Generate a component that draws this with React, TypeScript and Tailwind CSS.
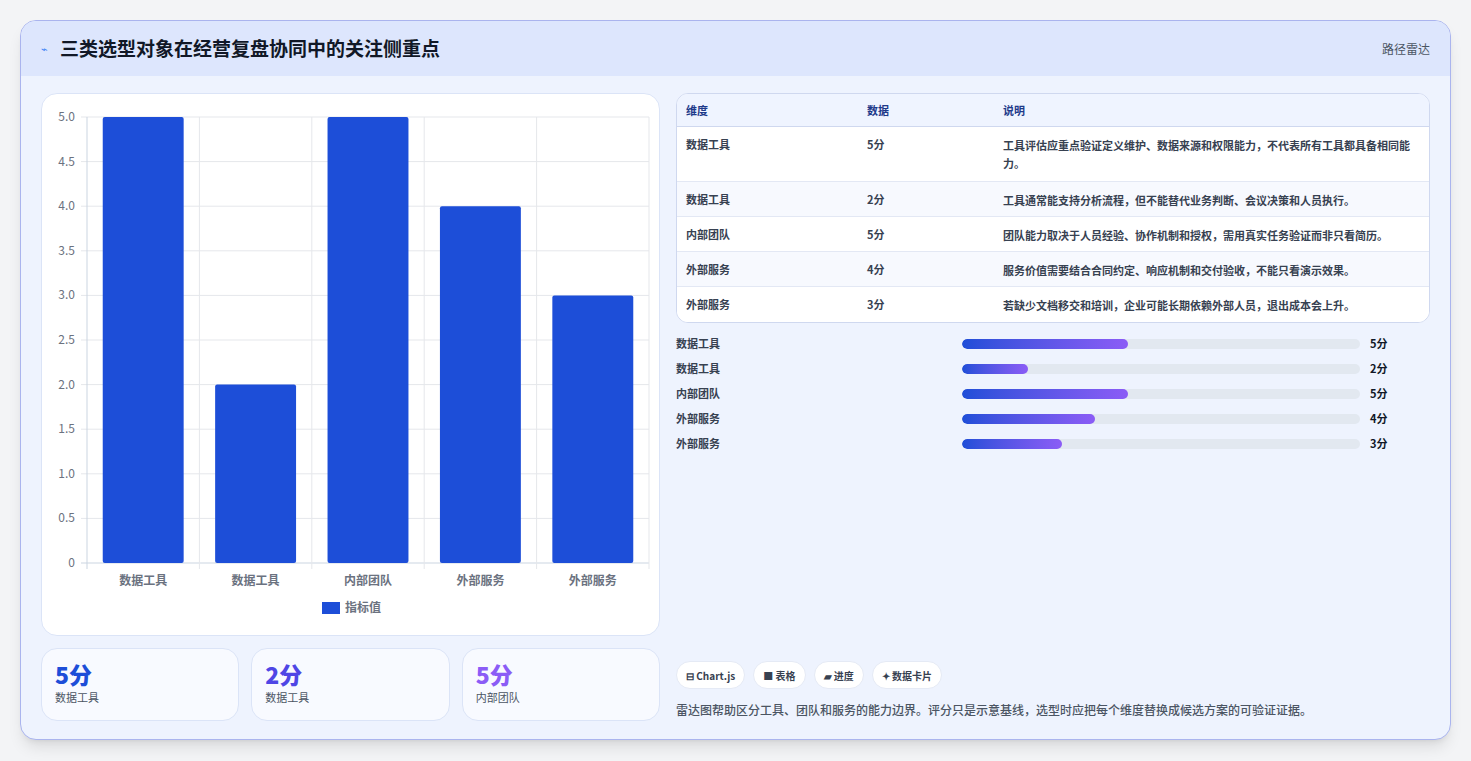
const FONT = { fontFamily: '"Noto Sans CJK SC", "Noto Sans", sans-serif' };

const ROWS = [
  { name: '数据工具', v: 5, desc: '工具评估应重点验证定义维护、数据来源和权限能力，不代表所有工具都具备相同能力。' },
  { name: '数据工具', v: 2, desc: '工具通常能支持分析流程，但不能替代业务判断、会议决策和人员执行。' },
  { name: '内部团队', v: 5, desc: '团队能力取决于人员经验、协作机制和授权，需用真实任务验证而非只看简历。' },
  { name: '外部服务', v: 4, desc: '服务价值需要结合合同约定、响应机制和交付验收，不能只看演示效果。' },
  { name: '外部服务', v: 3, desc: '若缺少文档移交和培训，企业可能长期依赖外部人员，退出成本会上升。' },
];

function BarChart() {
  // card-relative coordinates
  const x0 = 45, x1 = 607, yTop = 23, yBot = 469;
  const step = (x1 - x0) / 5;
  const ticks = [0, 0.5, 1, 1.5, 2, 2.5, 3, 3.5, 4, 4.5, 5];
  const y = (v: number) => yBot - (v / 5) * (yBot - yTop);
  return (
    <svg width="619" height="543" className="block" style={FONT}>
      {ticks.map((t) => (
        <g key={t}>
          <line x1={x0 - 6} x2={x1} y1={y(t)} y2={y(t)} stroke={t === 0 ? '#cbd5e1' : '#e5e7eb'} />
          <text x={x0 - 12} y={y(t) + 4} fontSize="12" textAnchor="end" fill="#6b7280">{t === 0 ? '0' : t.toFixed(1)}</text>
        </g>
      ))}
      {[0, 1, 2, 3, 4, 5].map((i) => (
        <line key={i} x1={x0 + i * step} x2={x0 + i * step} y1={yTop} y2={yBot + 6} stroke={i === 0 ? '#cbd5e1' : '#e5e7eb'} />
      ))}
      {ROWS.map((r, i) => {
        const bw = step * 0.72;
        const bx = x0 + i * step + (step - bw) / 2;
        return (
          <g key={i}>
            <rect x={bx} y={y(r.v)} width={bw} height={yBot - y(r.v)} rx="2" fill="#1d4ed8" />
            <text x={x0 + i * step + step / 2} y={yBot + 22} fontSize="12" fontWeight="600" textAnchor="middle" fill="#6b7280">{r.name}</text>
          </g>
        );
      })}
      <rect x="280" y="508" width="18" height="12" fill="#1d4ed8" />
      <text x="303" y="518" fontSize="12" fontWeight="600" fill="#6b7280">指标值</text>
    </svg>
  );
}

export default function App() {
  return (
    <div className="min-h-[761px] bg-[#f3f4f6] pt-5 px-5" style={FONT}>
      <div className="w-[1431px] h-[720px] rounded-2xl border border-[#aab4ee] bg-[#eef3fe] overflow-hidden shadow-lg flex flex-col">
        <div className="h-[55px] bg-[#dde6fd] flex items-center px-5 shrink-0">
          <span className="text-[#3b82f6] text-[11px] mr-3">⌁</span>
          <span className="text-[19px] font-bold text-[#111827]">三类选型对象在经营复盘协同中的关注侧重点</span>
          <span className="ml-auto text-[12px] text-[#4b5563]">路径雷达</span>
        </div>
        <div className="flex px-5 pt-[17px] gap-4 flex-1">
          <div className="w-[619px] flex flex-col gap-3">
            <div className="h-[543px] bg-white rounded-2xl border border-[#dbe4f7]">
              <BarChart />
            </div>
            <div className="grid grid-cols-3 gap-3">
              {[
                { v: '5分', l: '数据工具', c: 'text-[#1d4ed8]' },
                { v: '2分', l: '数据工具', c: 'text-[#4f46e5]' },
                { v: '5分', l: '内部团队', c: 'text-[#8b5cf6]' },
              ].map((s, i) => (
                <div key={i} className="h-[73px] rounded-2xl border border-[#dbe4f7] bg-[#f8faff] px-[13px] pt-[10px]">
                  <div className={`text-[23px] font-extrabold leading-[30px] ${s.c}`}>{s.v}</div>
                  <div className="text-[11px] text-[#4b5563]">{s.l}</div>
                </div>
              ))}
            </div>
          </div>
          <div className="flex-1 flex flex-col pr-[0px] w-[756px]">
            <div className="rounded-xl border border-[#cfd8ef] bg-white overflow-hidden text-[11px] font-semibold">
              <div className="flex h-[33px] items-center bg-[#eff4ff] border-b border-[#cfd8ef] text-[#1e3a8a]">
                <div className="w-[190px] pl-[9px]">维度</div>
                <div className="w-[136px]">数据</div>
                <div className="flex-1">说明</div>
              </div>
              {ROWS.map((r, i) => (
                <div key={i} className={`flex py-[9px] text-[#374151] ${i % 2 ? 'bg-[#f7f9fe]' : 'bg-white'} ${i < 4 ? 'border-b border-[#e3e8f4]' : ''} ${i === 0 ? 'min-h-[53px]' : 'h-[35px]'}`}>
                  <div className="w-[190px] pl-[9px]">{r.name}</div>
                  <div className="w-[136px]">{r.v}分</div>
                  <div className="flex-1 pr-2 leading-[18px]">{r.desc}</div>
                </div>
              ))}
            </div>
            <div className="mt-[8px] flex flex-col">
              {ROWS.map((r, i) => (
                <div key={i} className="flex items-center h-[25px] text-[11px] font-semibold text-[#374151]">
                  <div className="w-[286px]">{r.name}</div>
                  <div className="w-[398px] h-[10px] rounded-full bg-[#e2e8f0] overflow-hidden">
                    <div className="h-full rounded-full bg-gradient-to-r from-[#1d4ed8] to-[#8b5cf6]" style={{ width: `${(r.v / 12) * 100}%` }} />
                  </div>
                  <div className="ml-[10px] text-[#111827]">{r.v}分</div>
                </div>
              ))}
            </div>
            <div className="mt-auto mb-[20px]">
              <div className="flex gap-2 text-[10px] font-semibold text-[#374151]">
                {['⊟ Chart.js', '■ 表格', '▰ 进度', '✦ 数据卡片'].map((c) => (
                  <span key={c} className="h-[28px] px-[9px] flex items-center rounded-full bg-white border border-[#e5eaf5]">{c}</span>
                ))}
              </div>
              <div className="mt-[12px] text-[12px] text-[#4b5563] font-medium">雷达图帮助区分工具、团队和服务的能力边界。评分只是示意基线，选型时应把每个维度替换成候选方案的可验证证据。</div>
            </div>
          </div>
        </div>
      </div>
    </div>
  );
}
